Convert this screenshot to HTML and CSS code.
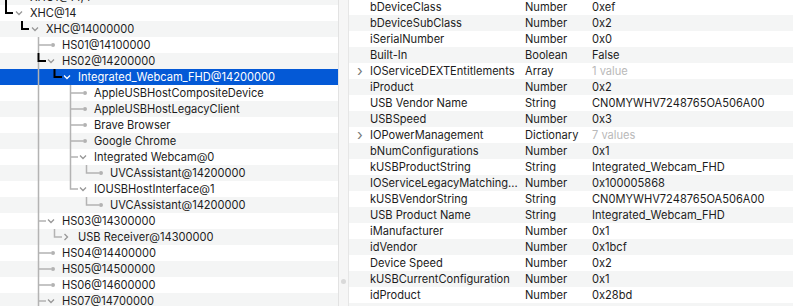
FILE: index.html
```html
<!DOCTYPE html>
<html lang="en">

<head>
    <meta charset="UTF-8">
    <title>IORegistryExplorer</title>
    <link rel="stylesheet" href="styles.css">
</head>

<body>
    <div class="window">
        <!-- 左边的树 -->
        <div class="tree">
            <div class="row alt">
                <svg width="30" height="16"><path d="M6 0V16" class="dark"/></svg>
                <span>XHC1@14,4</span>
            </div>
            <div class="row">
                <svg width="30" height="16"><path d="M6 0V8H13" class="dark"/><path d="M16 6.5l3 3 3-3" class="chev"/></svg>
                <span>XHC@14</span>
            </div>
            <div class="row alt">
                <svg width="46" height="16"><path d="M22 0V8H29" class="dark"/><path d="M32 6.5l3 3 3-3" class="chev"/></svg>
                <span>XHC@14000000</span>
            </div>
            <div class="row">
                <svg width="62" height="16"><path d="M38.5 0V16M38.5 8H51" class="line"/><circle cx="53" cy="8" r="2" class="dot"/></svg>
                <span>HS01@14100000</span>
            </div>
            <div class="row alt">
                <svg width="62" height="16"><path d="M38.5 8V16" class="line"/><path d="M38.5 0V8H46" class="dark"/><path d="M48 6.5l3 3 3-3" class="chev"/></svg>
                <span>HS02@14200000</span>
            </div>
            <div class="row selected">
                <svg width="78" height="16"><path d="M38.5 0V16" class="line"/><path d="M54.5 0V8H62" class="dark"/><path d="M64 6.5l3 3 3-3" class="chev white"/></svg>
                <span>Integrated_Webcam_FHD@14200000</span>
            </div>
            <div class="row">
                <svg width="94" height="16"><path d="M38.5 0V16M70.5 0V16M70.5 8H83" class="line"/><circle cx="85" cy="8" r="2" class="dot"/></svg>
                <span>AppleUSBHostCompositeDevice</span>
            </div>
            <div class="row alt">
                <svg width="94" height="16"><path d="M38.5 0V16M70.5 0V16M70.5 8H83" class="line"/><circle cx="85" cy="8" r="2" class="dot"/></svg>
                <span>AppleUSBHostLegacyClient</span>
            </div>
            <div class="row">
                <svg width="94" height="16"><path d="M38.5 0V16M70.5 0V16M70.5 8H83" class="line"/><circle cx="85" cy="8" r="2" class="dot"/></svg>
                <span>Brave Browser</span>
            </div>
            <div class="row alt">
                <svg width="94" height="16"><path d="M38.5 0V16M70.5 0V16M70.5 8H83" class="line"/><circle cx="85" cy="8" r="2" class="dot"/></svg>
                <span>Google Chrome</span>
            </div>
            <div class="row">
                <svg width="94" height="16"><path d="M38.5 0V16M70.5 0V16M70.5 8H78" class="line"/><path d="M80 6.5l3 3 3-3" class="chev"/></svg>
                <span>Integrated Webcam@0</span>
            </div>
            <div class="row alt">
                <svg width="110" height="16"><path d="M38.5 0V16M70.5 0V16M86.5 0V8H99" class="line"/><circle cx="101" cy="8" r="2" class="dot"/></svg>
                <span>UVCAssistant@14200000</span>
            </div>
            <div class="row">
                <svg width="94" height="16"><path d="M38.5 0V16M70.5 0V8H78" class="line"/><path d="M80 6.5l3 3 3-3" class="chev"/></svg>
                <span>IOUSBHostInterface@1</span>
            </div>
            <div class="row alt">
                <svg width="110" height="16"><path d="M38.5 0V16M86.5 0V8H99" class="line"/><circle cx="101" cy="8" r="2" class="dot"/></svg>
                <span>UVCAssistant@14200000</span>
            </div>
            <div class="row">
                <svg width="62" height="16"><path d="M38.5 0V16M38.5 8H46" class="line"/><path d="M48 6.5l3 3 3-3" class="chev"/></svg>
                <span>HS03@14300000</span>
            </div>
            <div class="row alt">
                <svg width="78" height="16"><path d="M38.5 0V16M54.5 0V8H62" class="line"/><path d="M64.5 5l3 3-3 3" class="chev"/></svg>
                <span>USB Receiver@14300000</span>
            </div>
            <div class="row">
                <svg width="62" height="16"><path d="M38.5 0V16M38.5 8H51" class="line"/><circle cx="53" cy="8" r="2" class="dot"/></svg>
                <span>HS04@14400000</span>
            </div>
            <div class="row alt">
                <svg width="62" height="16"><path d="M38.5 0V16M38.5 8H51" class="line"/><circle cx="53" cy="8" r="2" class="dot"/></svg>
                <span>HS05@14500000</span>
            </div>
            <div class="row">
                <svg width="62" height="16"><path d="M38.5 0V16M38.5 8H51" class="line"/><circle cx="53" cy="8" r="2" class="dot"/></svg>
                <span>HS06@14600000</span>
            </div>
            <div class="row alt">
                <svg width="62" height="16"><path d="M38.5 0V16M38.5 8H46" class="line"/><path d="M48 6.5l3 3 3-3" class="chev"/></svg>
                <span>HS07@14700000</span>
            </div>
        </div>

        <!-- 分隔条 -->
        <div class="split">
            <span class="grip"></span>
        </div>

        <!-- 右边的属性表 -->
        <div class="props">
            <div class="prop"><i></i><span>bDeviceClass</span><span>Number</span><span>0xef</span></div>
            <div class="prop"><i></i><span>bDeviceSubClass</span><span>Number</span><span>0x2</span></div>
            <div class="prop"><i></i><span>iSerialNumber</span><span>Number</span><span>0x0</span></div>
            <div class="prop"><i></i><span>Built-In</span><span>Boolean</span><span>False</span></div>
            <div class="prop"><i>&#x203A;</i><span>IOServiceDEXTEntitlements</span><span>Array</span><span class="muted">1 value</span></div>
            <div class="prop"><i></i><span>iProduct</span><span>Number</span><span>0x2</span></div>
            <div class="prop"><i></i><span>USB Vendor Name</span><span>String</span><span>CN0MYWHV7248765OA506A00</span></div>
            <div class="prop"><i></i><span>USBSpeed</span><span>Number</span><span>0x3</span></div>
            <div class="prop"><i>&#x203A;</i><span>IOPowerManagement</span><span>Dictionary</span><span class="muted">7 values</span></div>
            <div class="prop"><i></i><span>bNumConfigurations</span><span>Number</span><span>0x1</span></div>
            <div class="prop"><i></i><span>kUSBProductString</span><span>String</span><span>Integrated_Webcam_FHD</span></div>
            <div class="prop"><i></i><span>IOServiceLegacyMatching...</span><span>Number</span><span>0x100005868</span></div>
            <div class="prop"><i></i><span>kUSBVendorString</span><span>String</span><span>CN0MYWHV7248765OA506A00</span></div>
            <div class="prop"><i></i><span>USB Product Name</span><span>String</span><span>Integrated_Webcam_FHD</span></div>
            <div class="prop"><i></i><span>iManufacturer</span><span>Number</span><span>0x1</span></div>
            <div class="prop"><i></i><span>idVendor</span><span>Number</span><span>0x1bcf</span></div>
            <div class="prop"><i></i><span>Device Speed</span><span>Number</span><span>0x2</span></div>
            <div class="prop"><i></i><span>kUSBCurrentConfiguration</span><span>Number</span><span>0x1</span></div>
            <div class="prop"><i></i><span>idProduct</span><span>Number</span><span>0x28bd</span></div>
            <div class="prop"></div>
        </div>
    </div>
</body>

</html>
```

FILE: styles.css
```css
* {
    margin: 0;
    padding: 0;
}

body {
    font-family: Inter, "Liberation Sans", sans-serif;
    font-size: 11.1px;
    color: #1c1c1c;
    background: #fff;
    overflow: hidden;
}

.window {
    display: flex;
    height: 306px;
    overflow: hidden;
}

/* 树 */
.tree {
    width: 338px;
    flex: none;
    margin-top: -11px;
}

.row {
    display: flex;
    align-items: center;
    height: 16px;
    white-space: nowrap;
}

.row.alt {
    background: #f4f5f5;
}

.row svg {
    flex: none;
    display: block;
}

.row span {
    line-height: 16px;
}

.row.selected {
    background: #0459d6;
    color: #fff;
}

.line {
    fill: none;
    stroke: #b3b3b3;
    stroke-width: 1.5;
}

.dark {
    fill: none;
    stroke: #000;
    stroke-width: 2;
}

.chev {
    fill: none;
    stroke: #979797;
    stroke-width: 1.3;
}

.chev.white {
    stroke: #fff;
}

.dot {
    fill: #b3b3b3;
}

/* 分隔条 */
.split {
    width: 9px;
    flex: none;
    background: #f6f6f6;
    border-left: 1px solid #e2e2e2;
    border-right: 1px solid #e6e6e6;
    display: flex;
    flex-direction: column;
    align-items: center;
    padding-top: 279px;
}

.grip {
    width: 5px;
    height: 5px;
    border-radius: 50%;
    background: #d9d9d9;
}

/* 属性表 */
.props {
    flex: 1;
    margin-top: -1px;
}

.prop {
    display: grid;
    grid-template-columns: 21px 155px 67px 1fr;
    height: 16px;
    line-height: 16px;
    white-space: nowrap;
}

.prop:nth-child(even) {
    background: #f4f5f5;
}

.prop i {
    font-style: normal;
    color: #7a7a7a;
    font-size: 15px;
    line-height: 15px;
    padding-left: 8px;
}

.prop .muted {
    color: #b9b9b9;
}
```
